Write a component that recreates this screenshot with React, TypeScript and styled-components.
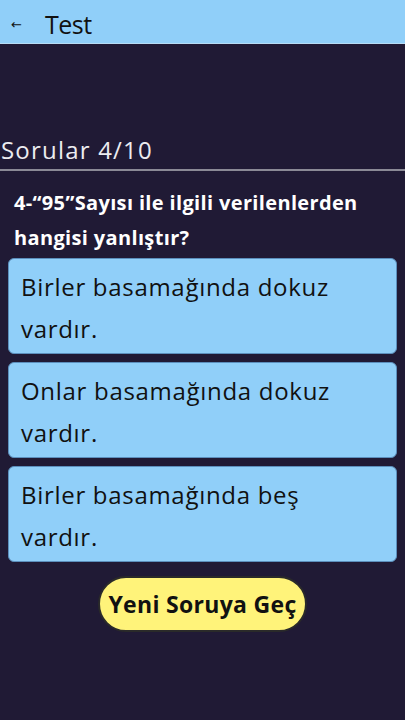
import React from "react";
import styled, { createGlobalStyle } from "styled-components";

const Global = createGlobalStyle`
  html, body { margin: 0; padding: 0; background: #201a35; }
  body { font-family: "Open Sans", "DejaVu Sans", sans-serif; }
  * { box-sizing: border-box; }
`;

const Page = styled.div`
  width: 405px;
  min-height: 720px;
  background: #201a35;
  display: flex;
  flex-direction: column;
`;

const TopBar = styled.header`
  height: 44px;
  background: #90cff9;
  border-bottom: 1px solid #b7dcf5;
  display: flex;
  align-items: center;
  padding: 4px 0 0 11px;
  gap: 20px;
  color: #111;
`;

const Back = styled.span`
  font-family: "DejaVu Sans", sans-serif;
  font-size: 13px;
  width: 14px;
  line-height: 1;
  margin-top: 2px;
`;

const Title = styled.h1`
  margin: 0;
  font-family: "Open Sans", sans-serif;
  font-weight: 400;
  font-size: 25px;
  letter-spacing: -0.5px;
`;

const Counter = styled.div`
  margin-top: 90px;
  padding: 0 0 4px 1px;
  font-family: "Open Sans", sans-serif;
  font-size: 24px;
  letter-spacing: 1.2px;
  color: #ececf0;
  border-bottom: 2px solid #8b8a96;
  line-height: 31px;
`;

const Question = styled.p`
  margin: 14px 0 0;
  padding: 0 14px;
  font-family: "Open Sans", sans-serif;
  font-weight: 700;
  font-size: 20px;
  letter-spacing: 0.35px;
  line-height: 35px;
  color: #ffffff;
  white-space: pre-line;
`;

const Options = styled.div`
  display: flex;
  flex-direction: column;
  gap: 8px;
  padding: 3px 8px 0;
`;

const Option = styled.button`
  text-align: left;
  background: #90cff9;
  border: 1px solid #5c8fbd;
  border-radius: 6px;
  padding: 7px 12px 3px;
  font-family: "Open Sans", sans-serif;
  font-size: 24px;
  letter-spacing: 0.7px;
  line-height: 42px;
  color: #111;
`;

const Footer = styled.div`
  display: flex;
  justify-content: center;
  padding-top: 14px;
`;

const NextButton = styled.button`
  background: #fff37a;
  border: 2px solid #2a2a2a;
  border-radius: 28px;
  height: 56px;
  padding: 0 8px;
  font-family: "Open Sans", sans-serif;
  font-weight: 700;
  font-size: 23px;
  letter-spacing: 0.3px;
  color: #111;
`;

const options = [
  ["Birler basamağında dokuz", "vardır."],
  ["Onlar basamağında dokuz", "vardır."],
  ["Birler basamağında beş", "vardır."],
];

export default function App() {
  return (
    <Page>
      <Global />
      <TopBar>
        <Back>←</Back>
        <Title>Test</Title>
      </TopBar>
      <Counter>Sorular 4/10</Counter>
      <Question>{"4-“95”Sayısı ile ilgili verilenlerden\nhangisi yanlıştır?"}</Question>
      <Options>
        {options.map(([a, b]) => (
          <Option key={a}>
            {a}
            <br />
            {b}
          </Option>
        ))}
      </Options>
      <Footer>
        <NextButton>Yeni Soruya Geç</NextButton>
      </Footer>
    </Page>
  );
}
